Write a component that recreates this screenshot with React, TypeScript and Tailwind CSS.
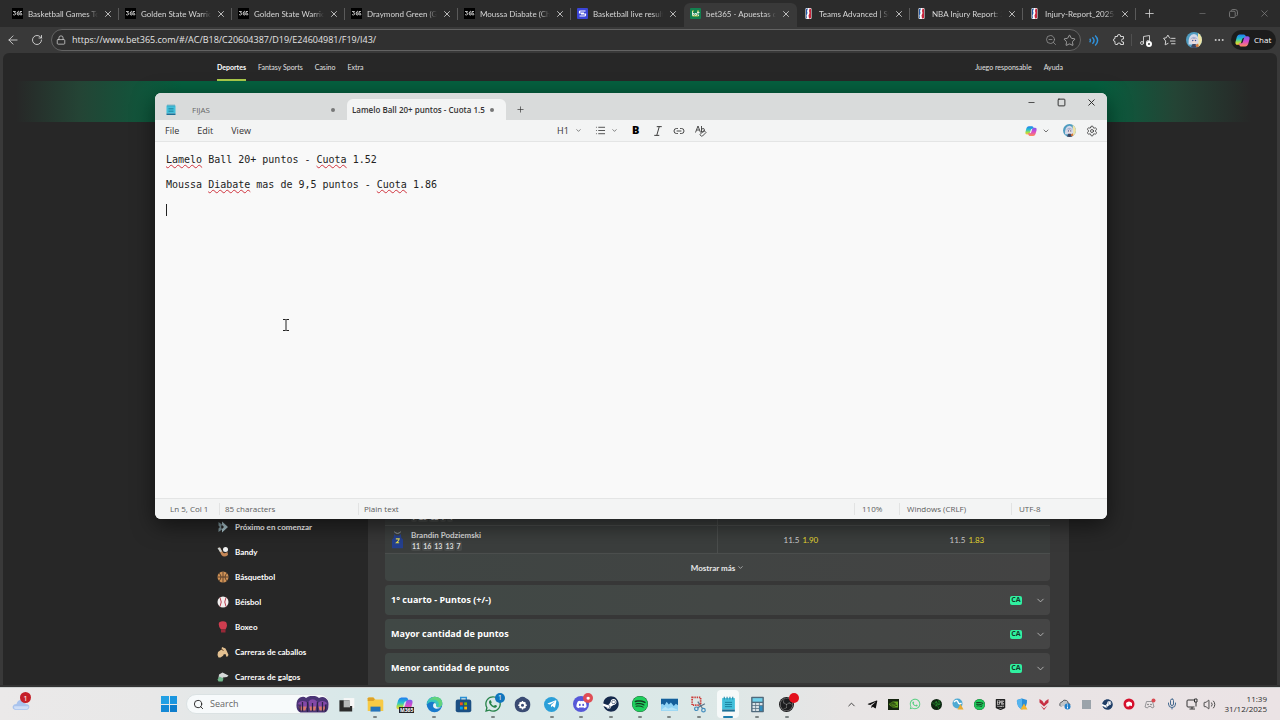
import type { ReactNode } from "react";
import {
  ArrowLeft,
  ChevronDown,
  ChevronUp,
  Ellipsis,
  Link2,
  List,
  Lock,
  Mic,
  Minus,
  Music,
  Plus,
  RotateCw,
  Search,
  Settings,
  Square,
  Star,
  Volume2,
  X,
  ZoomOut,
} from "lucide-react";
import { FaDiscord, FaSpotify, FaSteam, FaTelegramPlane, FaWhatsapp } from "react-icons/fa";
import { SiEpicgames, SiNvidia, SiObsstudio, SiRazer } from "react-icons/si";

const Icon365 = () => (
  <span className="flex h-[11px] w-[11px] shrink-0 items-center justify-center bg-black">
    <svg viewBox="0 0 22 22" className="h-[11px] w-[11px]" fill="none" stroke="#e5e5e5" strokeWidth="1.6">
      <path d="M2 7h5l-2 3q3 0 2 3q-2 2-5 0M14 6q-4 1-4 6q1 3 4 2q2-2 0-4h-3M20 7h-4v3q4 0 4 3q-2 2-4 0" />
    </svg>
  </span>
);

const IconSofa = () => (
  <svg viewBox="0 0 22 22" className="h-[11px] w-[11px] shrink-0">
    <rect width="22" height="22" rx="2" fill="#3b45d6" />
    <path d="M17 6H7q-2 0-2 2v2h9M5 16h10q2 0 2-2v-2H8" fill="none" stroke="#fff" strokeWidth="2.4" />
  </svg>
);

const IconBet = () => (
  <svg viewBox="0 0 22 22" className="h-[11px] w-[11px] shrink-0">
    <rect width="22" height="22" rx="2" fill="#12804f" />
    <path d="M5 6v9h3v-4H5M10 15v-4h3v4h-3M16 6v9h2M14 9h5" fill="none" stroke="#f0f4ea" strokeWidth="1.8" />
    <path d="M4 6h4M14 6h4M5 16h12" stroke="#e9e04a" strokeWidth="1.6" />
  </svg>
);

const IconNba = () => (
  <svg viewBox="0 0 12 22" className="mx-[2px] h-[11px] w-[7px] shrink-0">
    <rect width="12" height="22" rx="2" fill="#fff" />
    <path d="M1 3q0-2 2-2h2L3 6l1 4-2 5 1 6q-2 0-2-2z" fill="#2358a5" />
    <path d="M8 1h1q2 0 2 2v16q0 2-2 2H7l-1-6 2-5-1-4z" fill="#c9253c" />
  </svg>
);

const CopilotLogo = ({ className = "" }: { className?: string }) => (
  <svg viewBox="0 0 32 32" className={className}>
    <defs>
      <linearGradient id="cpa" x1="0" y1="0" x2="0" y2="1">
        <stop offset="0" stopColor="#1f7cf2" />
        <stop offset=".45" stopColor="#27c3c9" />
        <stop offset=".75" stopColor="#a4dd45" />
        <stop offset="1" stopColor="#ffc533" />
      </linearGradient>
      <linearGradient id="cpb" x1="0" y1="0" x2="0" y2="1">
        <stop offset="0" stopColor="#7a5cf0" />
        <stop offset=".5" stopColor="#d94bc8" />
        <stop offset="1" stopColor="#ff8a5c" />
      </linearGradient>
    </defs>
    <path d="M10 3h9q3 0 4 4l1 3h-5q-3 0-4 4l-2 7q-1 4-5 4H5q-5 0-4-6L4 8q2-5 6-5z" fill="url(#cpa)" />
    <path d="M22 29h-9q-3 0-4-4l-1-3h5q3 0 4-4l2-7q1-4 5-4h3q5 0 4 6l-3 11q-2 5-6 5z" fill="url(#cpb)" />
  </svg>
);

const Avatar = ({ className = "" }: { className?: string }) => (
  <svg viewBox="0 0 32 32" className={className}>
    <clipPath id="avc"><circle cx="16" cy="16" r="16" /></clipPath>
    <g clipPath="url(#avc)">
      <rect width="32" height="32" fill="#4f9cc0" />
      <rect x="24" width="8" height="32" fill="#efe3a4" />
      <path d="M5 25q-1-20 11-21q11 1 9 21z" fill="#d3d9ea" />
      <ellipse cx="16" cy="17" rx="5" ry="6" fill="#f0d8d6" />
      <path d="M8 15q7-11 16 0l-5-2-3 2-3-2z" fill="#a5b1d0" />
      <circle cx="13.500" cy="17" r="1.500" fill="#345497" />
      <circle cx="19" cy="17" r="1.500" fill="#345497" />
      <path d="M9 32l4-8h6l5 8z" fill="#3c4663" />
      <path d="M19 26l5-3 2 6-5 2z" fill="#d8783e" />
    </g>
  </svg>
);

const NotepadIcon = ({ className = "" }: { className?: string }) => (
  <svg viewBox="0 0 24 24" className={className}>
    <path d="M3 3h18v16H3z" fill="#43bfda" />
    <path d="M3 19h18v3H3z" fill="#1c6f95" />
    <path d="M7 9h10M7 12h10M7 15h10" stroke="#1b829f" strokeWidth="1.400" />
    <path d="M6 1v4M10 1v4M14 1v4M18 1v4" stroke="#1d87a8" strokeWidth="1.500" />
  </svg>
);

const browserTabs = [
  { title: "Basketball Games Toc", icon: <Icon365 /> },
  { title: "Golden State Warrior", icon: <Icon365 /> },
  { title: "Golden State Warrior", icon: <Icon365 /> },
  { title: "Draymond Green (Gc", icon: <Icon365 /> },
  { title: "Moussa Diabate (Cha", icon: <Icon365 /> },
  { title: "Basketball live results", icon: <IconSofa /> },
  { title: "bet365 - Apuestas de", icon: <IconBet />, active: true },
  { title: "Teams Advanced | Sta", icon: <IconNba /> },
  { title: "NBA Injury Report: 20", icon: <IconNba /> },
  { title: "Injury-Report_2025-1", icon: <IconNba /> },
];

const sports = [
  {
    name: "Próximo en comenzar",
    icon: <><path d="M3 2l7 5-2 5 2 5-7 5v-7l3-3-3-3z" fill="#7f979e" /><path d="M10 1l12 11-12 11v-7l4-4-4-4z" fill="#a9c4cc" /></>,
  },
  {
    name: "Bandy",
    icon: <><path d="M2 4l4-1 6 10q3 3 9-1l1 6q-8 6-13 0z" fill="#c58655" /><circle cx="17" cy="7" r="5" fill="#f2f2f2" /><path d="M1 4l5-1 4 8-4 1z" fill="#ccd4d4" /></>,
  },
  {
    name: "Básquetbol",
    icon: <><circle cx="12" cy="12" r="11" fill="#cf9256" /><path d="M12 1v22M1 12h22M4 4q8 8 0 16M20 4q-8 8 0 16" fill="none" stroke="#493323" strokeWidth="1.600" /></>,
  },
  {
    name: "Béisbol",
    icon: <><circle cx="12" cy="12" r="11" fill="#f1eeee" /><path d="M6 3q5 9 0 18M18 3q-5 9 0 18" fill="none" stroke="#bd3f50" strokeWidth="2" /></>,
  },
  {
    name: "Boxeo",
    icon: <><path d="M4 3q7-4 14-1q3 5 1 11l-2 4H8q-6-6-4-14z" fill="#cf3d4f" /><path d="M8 17h9v6H8z" fill="#962837" /></>,
  },
  {
    name: "Carreras de caballos",
    icon: <><path d="M1 18l1-6 7-5 1-5 7 3 3 6 3 7-3 4-7-3-6 4H3z" fill="#e4c191" /><path d="M13 17l4-1 2 6-7 1z" fill="#272727" /><path d="M8 6l5 3" stroke="#5e4128" strokeWidth="2" /></>,
  },
  {
    name: "Carreras de galgos",
    icon: <><path d="M4 7l7-4 12 6-3 3-8 1-4 5-5-4z" fill="#d5d8d8" /><path d="M1 17l4-6 8 4-2 6H3z" fill="#72b78c" /></>,
  },
];

const playerRows = [
  { name: "", form: ["9", "25", "12", "9", "4"], over: "", overOdds: "", under: "", underOdds: "" },
  { name: "Brandin Podziemski", form: ["11", "16", "13", "13", "7"], over: "11.5", overOdds: "1.90", under: "11.5", underOdds: "1.83" },
];

const markets = ["1° cuarto - Puntos (+/-)", "Mayor cantidad de puntos", "Menor cantidad de puntos"];

function BrowserChrome() {
  return (
    <header className="text-[#d6d6d6]">
      <div className="flex h-[27px] bg-[#2b2b2b] pt-[3px] pl-[6px]">
        {browserTabs.map((tab, i) => (
          <div
            key={i}
            className={`flex w-[113px] items-center gap-[5px] px-[6px] pb-[3px] ${tab.active ? "rounded-t-md bg-[#393939]" : ""}`}
          >
            {tab.icon}
            <span className="min-w-0 flex-1 font-['Lato','Open_Sans',sans-serif] text-[8px] whitespace-nowrap [mask-image:linear-gradient(to_right,black_85%,transparent)]">
              {tab.title}
            </span>
            <button aria-label="Cerrar pestaña" className="shrink-0"><X size={10} /></button>
            <span className={`-mr-[6px] h-3 w-px shrink-0 ${tab.active || i === 5 ? "" : "bg-[#5a5a5a]"}`} />
          </div>
        ))}
        <button aria-label="Nueva pestaña" className="flex w-[26px] items-center justify-center pb-[3px]"><Plus size={13} strokeWidth={1.5} /></button>
        <div className="ml-auto flex items-center pb-[3px] text-[#858585]">
          <button aria-label="Minimizar" className="flex w-[31px] justify-center"><Minus size={9} strokeWidth={1.5} /></button>
          <button aria-label="Restaurar" className="flex w-[31px] justify-center">
            <svg viewBox="0 0 16 16" className="h-[9px] w-[9px]" fill="none" stroke="currentColor" strokeWidth="1.500">
              <rect x="1" y="4" width="10" height="11" rx="2" />
              <path d="M4 3q0-2 3-2h4q4 0 4 4v5q0 2-2 2" />
            </svg>
          </button>
          <button aria-label="Cerrar" className="flex w-[31px] justify-center"><X size={11} strokeWidth={1.5} /></button>
        </div>
      </div>

      <div className="flex h-[26px] items-center bg-[#393939] pr-1 pl-[6px]">
        <button aria-label="Atrás" className="flex w-[14px] justify-center"><ArrowLeft size={14} strokeWidth={1.5} /></button>
        <button aria-label="Actualizar" className="ml-2 flex w-[18px] justify-center"><RotateCw size={12} strokeWidth={1.8} /></button>
        <label className="ml-[5px] flex h-[22px] flex-1 items-center gap-[6px] rounded-full border border-[#636363] bg-[#303030] px-1">
          <Lock size={10} strokeWidth={1.8} />
          <input
            aria-label="Dirección"
            defaultValue="https://www.bet365.com/#/AC/B18/C20604387/D19/E24604981/F19/I43/"
            className="min-w-0 flex-1 bg-transparent text-[9px] text-[#e4e4e4] outline-none"
          />
          <ZoomOut size={12} strokeWidth={1.5} className="text-[#9a9a9a]" />
          <Star size={13} strokeWidth={1.5} className="text-[#b5b5b5]" />
        </label>
        <button aria-label="Leer en voz alta" className="flex w-[25px] justify-center">
          <svg viewBox="0 0 20 20" className="h-[11px] w-[11px]" fill="none" stroke="#3092dc" strokeWidth="2.600">
            <path d="M3 7q3 3 0 6M8 4q6 6 0 12M13 1q9 9 0 18" />
          </svg>
        </button>
        <button aria-label="Extensiones" className="flex w-[25px] justify-center">
          <svg viewBox="0 0 24 24" className="h-3 w-3" fill="none" stroke="currentColor" strokeWidth="2">
            <path d="M4 5h5q-1-4 3-4t3 4h6v5q-4-1-4 3t4 3v5h-6q1-3-3-3t-3 3H6q-2 0-2-2v-4q-3 0-3-3t3-3z" />
          </svg>
        </button>
        <span className="h-3 w-px bg-[#505050]" />
        <button aria-label="Medios" className="relative flex w-[26px] justify-center">
          <Music size={12} strokeWidth={1.8} />
          <span className="absolute right-[6px] -bottom-[1px] h-[6px] w-[6px] rounded-full border-2 border-white bg-[#393939]" />
        </button>
        <button aria-label="Favoritos" className="flex w-[23px] justify-center">
          <svg viewBox="0 0 24 24" className="h-[13px] w-[13px]" fill="none" stroke="currentColor" strokeWidth="1.800">
            <path d="M14 8l-2-1-3-5-3 5-5 1 4 5-1 7 6-3M15 8h8M13 13h10M15 18h8" />
          </svg>
        </button>
        <button aria-label="Perfil" className="flex w-[25px] justify-center"><Avatar className="h-4 w-4" /></button>
        <button aria-label="Más" className="flex w-[25px] justify-center"><Ellipsis size={12} /></button>
        <button className="flex h-5 w-[45px] items-center gap-1 rounded-full bg-[#1c1c1c] pl-1 text-[8px] text-white">
          <CopilotLogo className="h-[15px] w-[15px]" />
          Chat
        </button>
      </div>
    </header>
  );
}

function BettingPage() {
  return (
    <main className="mx-[3px] flex min-h-0 flex-1 flex-col overflow-hidden rounded-t-md bg-[#272727] font-['Lato','Open_Sans',sans-serif] text-white">
      <nav className="flex h-[28px] shrink-0 items-stretch justify-center pl-[6px] text-[7px]">
        <div className="flex w-[852px] items-stretch gap-3 pr-[6px] text-[#e0e0e0]">
          <a href="#deportes" className="flex items-center border-b-2 border-[#a9c94a] pt-[2px] font-bold text-white">Deportes</a>
          <a href="#fantasy" className="flex items-center pt-px">Fantasy Sports</a>
          <a href="#casino" className="flex items-center pt-px">Casino</a>
          <a href="#extra" className="flex items-center pt-px">Extra</a>
          <a href="#juego" className="ml-auto flex items-center pt-px">Juego responsable</a>
          <a href="#ayuda" className="flex items-center pt-px">Ayuda</a>
        </div>
      </nav>
      <div className="h-[41px] shrink-0 bg-[linear-gradient(to_right,#272727_1%,#244435_6%,#05603f_14%,#05603f_86%,#244435_92%,#272727_98%)]" />

      <div className="flex min-h-0 flex-1 justify-center pl-[6px]">
        <aside className="flex w-[151px] flex-col justify-end overflow-hidden">
          <ul className="-mb-[4px] shrink-0">
            {sports.map((sport) => (
              <li key={sport.name}>
                <a href="#deporte" className="flex h-[25px] items-center gap-[6px] text-[8px] font-bold">
                  <svg viewBox="0 0 24 24" className="h-3 w-3">{sport.icon}</svg>
                  {sport.name}
                </a>
              </li>
            ))}
          </ul>
        </aside>

        <section className="flex w-[701px] flex-col justify-end gap-1 overflow-hidden bg-[#373737] pr-[19px] pb-[2px] pl-[17px]">
          <div className="shrink-0 overflow-hidden rounded bg-linear-to-r from-[#3f4543] to-[#434343]">
            <table className="w-full table-fixed border-collapse">
              <tbody>
                {playerRows.map((row, i) => (
                  <tr key={i} className="h-[28px] border-b border-[#4b4e4d] bg-[#3b3e3d]">
                    <td className="w-1/2 border-r border-[#4b4e4d] p-0">
                      <div className="flex items-center gap-2 pl-[7px]">
                        <svg viewBox="0 0 20 32" className="h-[18px] w-[11px]">
                          <path d="M4 5l3 3h6l3-3 1 7 3 3v16H0V15l3-3z" fill="#25408f" />
                          <path d="M4 1q6 6 12 0" fill="none" stroke="#a5abb5" strokeWidth="1.500" />
                          <path d="M7 14h6l-1 3-4 4h5" fill="none" stroke="#e5dc4e" strokeWidth="2" />
                        </svg>
                        <div>
                          <div className="h-3 text-[8px] leading-3 font-bold text-[#d8d8d8]">{row.name}</div>
                          <div className="flex gap-px">
                            {row.form.map((n, j) => (
                              <span key={j} className="rounded-xs bg-[#484b4a] px-px text-[7px] leading-[10px] font-bold text-[#dcdcdc]">{n}</span>
                            ))}
                          </div>
                        </div>
                      </div>
                    </td>
                    <td className="w-1/4 p-0 text-[8px] text-[#cfcfcf]">
                      <span className="flex justify-center gap-[3px]">{row.over}<span className="text-[#e8dc32]">{row.overOdds}</span></span>
                    </td>
                    <td className="w-1/4 p-0 text-[8px] text-[#cfcfcf]">
                      <span className="flex justify-center gap-[3px]">{row.under}<span className="text-[#e8dc32]">{row.underOdds}</span></span>
                    </td>
                  </tr>
                ))}
              </tbody>
            </table>
            <button className="flex h-[27px] w-full items-center justify-center gap-[2px] text-[8px] font-bold text-[#e8e8e8]">
              Mostrar más <ChevronDown size={7} />
            </button>
          </div>
          {markets.map((market) => (
            <button
              key={market}
              className="flex h-[30px] shrink-0 items-center rounded bg-linear-to-r from-[#404845] via-[#434745] to-[#454545] pr-1 pl-[6px] text-left font-['Open_Sans','Noto_Sans',sans-serif] text-[9px] font-bold"
            >
              <span className="flex-1">{market}</span>
              <span className="mr-[13px] flex h-[9px] w-3 items-center justify-center rounded-xs bg-[#30f0a0] text-[7px] font-bold text-[#14392b]">CA</span>
              <ChevronDown size={11} strokeWidth={1.8} className="text-[#c4c4c4]" />
            </button>
          ))}
        </section>
      </div>
    </main>
  );
}

const Misspelled = ({ children }: { children: string }) => (
  <span className="underline decoration-[#d0343f] decoration-wavy decoration-1 underline-offset-1">{children}</span>
);

function NotepadWindow() {
  return (
    <div className="absolute top-[93px] right-[173px] bottom-[201px] left-[155px] flex flex-col overflow-hidden rounded-md bg-[#f9f9f9] text-[#333] shadow-[0_6px_22px_rgba(0,0,0,0.55)]">
      <div className="flex h-[27px] shrink-0 items-end bg-[#d9dbdb]">
        <div className="flex h-[21px] w-[192px] items-center pr-3 pl-[10px] text-[#666]">
          <NotepadIcon className="h-3 w-3" />
          <span className="ml-[15px] flex-1 text-[8px]">FIJAS</span>
          <span className="h-1 w-1 rounded-full bg-[#777]" />
        </div>
        <div className="flex h-[21px] w-[159px] items-center rounded-t-md bg-[#f3f4f4] pr-3 pl-[5px]">
          <span className="flex-1 text-[8px] font-semibold whitespace-nowrap">Lamelo Ball 20+ puntos - Cuota 1.5</span>
          <span className="h-1 w-1 shrink-0 rounded-full bg-[#777]" />
        </div>
        <button aria-label="New tab" className="flex h-[21px] w-[29px] items-center justify-center"><Plus size={9} strokeWidth={1.8} /></button>
        <div className="mb-[9px] ml-auto flex h-[18px] items-center text-[#222]">
          <button aria-label="Minimize" className="flex w-[30px] justify-center"><Minus size={9} /></button>
          <button aria-label="Maximize" className="flex w-[30px] justify-center"><Square size={9} strokeWidth={2.4} /></button>
          <button aria-label="Close" className="flex w-[31px] justify-center"><X size={11} /></button>
        </div>
      </div>

      <div className="grid h-[22px] shrink-0 grid-cols-[1fr_auto_1fr] items-center border-b border-[#e4e5e5] bg-[#f3f4f4]">
        <div className="flex gap-[18px] pl-[10px] text-[9px]">
          <button>File</button>
          <button>Edit</button>
          <button>View</button>
        </div>
        <div className="flex items-center pl-[2px]">
          <button className="flex w-[38px] items-center gap-[6px] text-[9px]">H1 <ChevronDown size={7} /></button>
          <button aria-label="List" className="flex w-[37px] items-center gap-[5px]"><List size={11} strokeWidth={1.8} /><ChevronDown size={7} /></button>
          <button aria-label="Bold" className="flex w-[21px] items-start text-[11px] font-extrabold text-black">B</button>
          <button aria-label="Italic" className="flex w-5 items-center">
            <svg viewBox="0 0 16 16" className="h-[10px] w-[10px]" fill="none" stroke="currentColor" strokeWidth="1.500">
              <path d="M6 1h8M2 15h8M10 1L6 15" />
            </svg>
          </button>
          <button aria-label="Link" className="flex w-[22px] items-center"><Link2 size={12} strokeWidth={1.8} /></button>
          <button aria-label="Clear formatting" className="flex w-3 items-center">
            <svg viewBox="0 0 24 24" className="h-3 w-3" fill="none" stroke="currentColor" strokeWidth="1.700">
              <path d="M1 15L6 2l5 13M3 10h6M13 2v12q6 1 6-4t-6-2M11 18l7-7 4 4-7 7q-2 1-4-1t0-3z" />
            </svg>
          </button>
        </div>
        <div className="flex items-center justify-end pr-[9px]">
          <button aria-label="Copilot" className="flex items-center gap-[5px]">
            <CopilotLogo className="h-3 w-3" />
            <ChevronDown size={8} />
          </button>
          <button aria-label="Account" className="ml-[13px]"><Avatar className="h-[13px] w-[13px]" /></button>
          <button aria-label="Settings" className="ml-[10px]"><Settings size={12} strokeWidth={1.6} /></button>
        </div>
      </div>

      <div
        role="textbox"
        aria-multiline="true"
        aria-label="Text editor"
        contentEditable
        suppressContentEditableWarning
        className="min-h-0 flex-1 overflow-hidden px-[11px] pt-[5px] font-['DejaVu_Sans_Mono',monospace] text-[10px] leading-[25px] text-[#222] outline-none"
      >
        <p><Misspelled>Lamelo</Misspelled> Ball 20+ puntos - <Misspelled>Cuota</Misspelled> 1.52</p>
        <p>Moussa <Misspelled>Diabate</Misspelled> mas de 9,5 puntos - <Misspelled>Cuota</Misspelled> 1.86</p>
        <p className="flex h-[25px] items-center"><span className="h-3 w-px bg-[#222]" /></p>
      </div>

      <footer className="flex h-[21px] shrink-0 items-center border-t border-[#e4e5e5] bg-[#f3f4f4] text-[8px] text-[#5c5c5c]">
        <span className="w-[64px] pl-[15px]">Ln 5, Col 1</span>
        <span className="w-[139px] border-l border-[#e2e3e3] pl-[5px]">85 characters</span>
        <span className="flex-1 border-l border-[#e2e3e3] pl-[5px]">Plain text</span>
        <span className="w-[45px] border-l border-[#e2e3e3] pl-[7px]">110%</span>
        <span className="w-[112px] border-l border-[#e2e3e3] pl-[7px]">Windows (CRLF)</span>
        <span className="w-[96px] border-l border-[#e2e3e3] pl-[7px]">UTF-8</span>
      </footer>
    </div>
  );
}

const Svg = ({ children, size = "h-[17px] w-[17px]" }: { children: ReactNode; size?: string }) => (
  <svg viewBox="0 0 24 24" className={size}>{children}</svg>
);

const taskbarApps: { name: string; icon: ReactNode; running?: boolean; active?: boolean; badge?: string; badgeColor?: string }[] = [
  { name: "Escritorios", icon: <Svg><rect x="8" y="3" width="15" height="14" fill="#f7f7f7" /><path d="M2 6h14v8h4v8H2z" fill="#2c2c2c" /><path d="M8 6h9v10H8z" fill="#b7baba" /></Svg> },
  { name: "Explorador", running: true, icon: <Svg><path d="M1 4q0-2 2-2h6l3 3h9q2 0 2 2v14H1z" fill="#f7ca45" /><path d="M1 3q0-1 2-1h6l2 3-2 2H1z" fill="#dda129" /><path d="M5 15h14v7H5z" fill="#2374bb" /></Svg> },
  {
    name: "Microsoft 365",
    icon: (
      <span className="relative block">
        <CopilotLogo className="h-[17px] w-[17px]" />
        <span className="absolute right-[-1px] bottom-0 bg-[#222] px-px text-[5px] leading-[6px] font-bold text-white">M365</span>
      </span>
    ),
  },
  {
    name: "Edge",
    running: true,
    icon: (
      <Svg>
        <circle cx="12" cy="12" r="11" fill="#1879cb" />
        <path d="M1 12Q2 1 13 1q10 1 10 9 0 6-7 6-3 0-3-2 2-3-1-5-6-3-11 3z" fill="#39c5bd" />
        <path d="M12 1q11 0 11 10 0 5-7 5 4-4 1-8-4-5-13-2 4-5 8-5z" fill="#63d37c" />
        <path d="M10 14q0-4 3-4 2 2 1 4 1 3 8 2-3 2-7 2-5-1-5-4z" fill="#e9f4f7" />
      </Svg>
    ),
  },
  {
    name: "Microsoft Store",
    icon: (
      <Svg>
        <path d="M8 6V2h8v4" fill="none" stroke="#2b8fd4" strokeWidth="2" />
        <rect x="1" y="5" width="22" height="18" rx="3" fill="#1b4f83" />
        <path d="M7 9h4v4H7z" fill="#f25022" /><path d="M13 9h4v4h-4z" fill="#7fba00" />
        <path d="M7 15h4v4H7z" fill="#00a4ef" /><path d="M13 15h4v4h-4z" fill="#ffb900" />
      </Svg>
    ),
  },
  { name: "WhatsApp", running: true, badge: "1", badgeColor: "bg-[#1176bd]", icon: <FaWhatsapp size={18} color="#27834a" /> },
  {
    name: "Configuración",
    icon: (
      <Svg>
        <path d="M7 3q5-4 10 0 6 2 6 9 0 6-4 9-7 4-14 0-4-3-4-9 0-7 6-9z" fill="#3a4b73" />
        <circle cx="12" cy="13" r="3.500" fill="none" stroke="#fff" strokeWidth="2.600" />
        <path d="M12 7v3M12 16v3M6 13h3M15 13h3M8 9l2 2M14 15l2 2M16 9l-2 2M10 15l-2 2" stroke="#fff" strokeWidth="2" />
      </Svg>
    ),
  },
  { name: "Telegram", running: true, icon: <span className="flex h-[15px] w-[15px] items-center justify-center rounded-full bg-[#2b9fd8]"><FaTelegramPlane size={10} color="#fff" /></span> },
  { name: "Discord", running: true, badge: "●", badgeColor: "bg-[#df4d55]", icon: <span className="flex h-4 w-4 items-center justify-center rounded-full bg-[#5658d8]"><FaDiscord size={11} color="#fff" /></span> },
  { name: "Steam", running: true, icon: <span className="block rounded-full bg-white"><FaSteam size={16} color="#152a4c" /></span> },
  { name: "Spotify", running: true, icon: <span className="block rounded-full bg-[#143c22]"><FaSpotify size={16} color="#20cf5e" /></span> },
  { name: "Monitor", running: true, icon: <Svg><path d="M0 4h24v17H0z" fill="#8fd2f4" /><path d="M0 4h24v9l-3-2-3 3-4-5-3 3-3-4-3 5-3-2-2 1z" fill="#145f9b" /><path d="M1 19l5-4 4 3 5-2 8 3v1H1z" fill="#b4e4f8" /></Svg> },
  { name: "Recortes", running: true, icon: <Svg><rect x="3" y="2" width="12" height="11" fill="none" stroke="#cc3b38" strokeWidth="2.400" strokeDasharray="2 1.200" /><path d="M11 8l7 10M21 11L10 17" stroke="#5b7489" strokeWidth="1.800" /><circle cx="19" cy="20" r="2.500" fill="none" stroke="#3f8bbd" strokeWidth="1.700" /><circle cx="9" cy="18" r="2.500" fill="none" stroke="#3f8bbd" strokeWidth="1.700" /></Svg> },
  { name: "Bloc de notas", running: true, active: true, icon: <NotepadIcon className="h-[17px] w-[17px]" /> },
  {
    name: "Calculadora",
    running: true,
    icon: (
      <Svg>
        <rect x="3" y="1" width="18" height="22" rx="1" fill="#506a7c" />
        <path d="M5 3h14v5H5z" fill="#6fd0ea" />
        <path d="M5 10h4v3H5zM10 10h4v3h-4zM15 10h4v3h-4zM5 14h4v3H5zM10 14h4v3h-4zM5 18h4v3H5zM10 18h4v3h-4z" fill="#d9e2e7" />
        <path d="M15 14h4v7h-4z" fill="#2f8fc1" />
      </Svg>
    ),
  },
  { name: "OBS", running: true, badge: " ", badgeColor: "bg-[#e3101c]", icon: <span className="flex h-[15px] w-[15px] items-center justify-center rounded-full bg-[#1d1d1f]"><SiObsstudio size={13} color="#8a8a8a" /></span> },
];

const ShieldTray = () => (
  <Svg size="h-3 w-3">
    <path d="M12 1l10 3q1 14-10 19Q1 18 2 4z" fill="#2a8fd8" />
    <path d="M12 1v22Q1 18 2 4z" fill="#56b4ee" />
    <path d="M16 11l7 12H9z" fill="#f5b52c" />
  </Svg>
);

const trayIcons: { name: string; icon: ReactNode }[] = [
  { name: "Mostrar iconos ocultos", icon: <ChevronUp size={11} color="#333" /> },
  { name: "Telegram", icon: <FaTelegramPlane size={11} color="#111" /> },
  { name: "NVIDIA", icon: <span className="flex h-[11px] w-[11px] items-center justify-center bg-[#15240f]"><SiNvidia size={9} color="#68a722" /></span> },
  { name: "WhatsApp", icon: <FaWhatsapp size={12} color="#55cf80" /> },
  { name: "Razer", icon: <span className="flex h-[11px] w-[11px] items-center justify-center rounded-full bg-[#0d2511]"><SiRazer size={9} color="#36e045" /></span> },
  { name: "Red", icon: <Svg size="h-3 w-3"><circle cx="11" cy="11" r="10" fill="#4eaad3" /><path d="M4 8q6-6 8 0t7 2" fill="none" stroke="#fff" strokeWidth="3" /><path d="M17 12l6 11H11z" fill="#e9ac32" /></Svg> },
  { name: "Spotify", icon: <span className="block rounded-full bg-[#154423]"><FaSpotify size={11} color="#20c85b" /></span> },
  { name: "Epic Games", icon: <SiEpicgames size={11} color="#222" /> },
  { name: "Seguridad", icon: <ShieldTray /> },
  { name: "Antivirus", icon: <Svg size="h-3 w-3"><path d="M3 2l6 4 3 5 3-5 6-4v7l-9 8-9-8z" fill="#c72f42" /><path d="M5 15l7 6 7-6-7 9z" fill="#c72f42" /></Svg> },
  { name: "OneDrive", icon: <Svg size="h-3 w-3"><path d="M4 17q-4-2-2-6 1-3 4-3 3-6 9-3 3 1 3 5 4 1 4 4" fill="#bfc4c8" stroke="#4d5257" strokeWidth="1.800" /><circle cx="17" cy="17" r="6" fill="#1f7fca" /><path d="M17 13v2M17 17v4" stroke="#fff" strokeWidth="2" /></Svg> },
  { name: "Aplicación", icon: <span className="block h-[9px] w-[9px] bg-[#9ba3aa]" /> },
  { name: "Steam", icon: <span className="block rounded-full bg-white"><FaSteam size={11} color="#203e66" /></span> },
  { name: "Riot", icon: <Svg size="h-3 w-3"><circle cx="12" cy="12" r="11" fill="#d5102c" /><path d="M6 10q6-6 12 0v6l-5-1-1 2H7z" fill="#fff" /></Svg> },
  { name: "Discord", icon: <Svg size="h-3 w-3"><path d="M5 7h12l3 11-4 2-2-3H9l-2 3-5-2z" fill="none" stroke="#8c8c90" strokeWidth="1.800" /><circle cx="8" cy="13" r="1.500" fill="#666" /><circle cx="14" cy="13" r="1.500" fill="#666" /><circle cx="19" cy="5" r="4" fill="#d94950" /></Svg> },
  { name: "Micrófono", icon: <Mic size={12} color="#44698f" /> },
];

function Taskbar() {
  return (
    <footer className="relative z-10 flex h-8 shrink-0 items-center bg-[linear-gradient(to_right,#ebe9e9,#e8e8e8_12%,#d8e8e9_28%,#dce8e7_55%,#e8e5e5_66%,#ebe3e5)] pr-[13px] pl-3">
      <button aria-label="Clima" className="relative w-5">
        <Svg size="h-[18px] w-[18px]">
          <path d="M5 20q-5-1-4-5 1-3 5-3 2-7 8-5 4 1 4 5 6 0 5 5-1 3-5 3z" fill="#a9c3ed" />
          <path d="M5 19q-3-1-2-4h19q0 4-4 4z" fill="#cfdef6" />
        </Svg>
        <span className="absolute -top-[3px] left-2 flex h-[11px] w-[11px] items-center justify-center rounded-full bg-[#c51f28] text-[8px] text-white">1</span>
      </button>
      <button aria-label="Inicio" className="ml-[129px] grid h-4 w-4 grid-cols-2 gap-px">
        <span className="bg-[#22a0e4]" />
        <span className="bg-[#1b96df]" />
        <span className="bg-[#158ad6]" />
        <span className="bg-[#0d7dcc]" />
      </button>
      <label className="ml-[9px] flex h-5 w-[144px] items-center gap-[6px] rounded-full border border-[#dbe2e3] bg-[#f7fafb] pl-[6px]">
        <Search size={11} color="#222" className="shrink-0" />
        <input aria-label="Search" placeholder="Search" className="w-0 flex-1 bg-transparent text-[9px] outline-none placeholder:text-[#666]" />
        <svg viewBox="0 0 66 34" className="h-[17px] w-[33px] shrink-0">
          <path d="M8 3q8-3 12 1 6-5 13-4 8-1 13 4 7-4 13 0 7 5 6 14 0 14-8 15H9Q0 29 1 17 1 7 8 3z" fill="#4a3475" />
          <path d="M4 14q10-8 20 0l-3 10H9zM25 11q8-9 17 0l-2 13H27zM43 14q10-8 19 0l-5 10H46z" fill="#8449a8" />
          <path d="M5 21h16l-2 8H9zM27 21h13l-1 8H28zM45 21h15l-4 8H47z" fill="#d9786f" />
          <path d="M13 12v19M23 12v20M33 14v16M43 12v20M53 12v19M8 17v14M59 17v14" stroke="#2f2348" strokeWidth="2.500" />
        </svg>
      </label>

      <div className="ml-[5px] flex flex-1 justify-between">
        {taskbarApps.map((app) => (
          <button
            key={app.name}
            aria-label={app.name}
            className={`relative flex h-7 w-[22px] items-center justify-center rounded-sm ${app.active ? "bg-[#f6f9f9]" : ""}`}
          >
            {app.icon}
            {app.badge && (
              <span className={`absolute top-[3px] right-[-1px] flex h-[10px] w-[10px] items-center justify-center rounded-full text-[7px] text-white ${app.badgeColor}`}>
                {app.badge}
              </span>
            )}
            {app.running && (
              <span className={`absolute bottom-0 h-[2px] rounded-full ${app.active ? "w-[10px] bg-[#1c7dac]" : "w-1 bg-[#7c8484]"}`} />
            )}
          </button>
        ))}
      </div>

      <div className="ml-[47px] flex w-[333px] items-center justify-between">
        {trayIcons.map((item) => (
          <button key={item.name} aria-label={item.name} className="flex w-3 justify-center">{item.icon}</button>
        ))}
      </div>
      <button aria-label="Red y volumen" className="ml-2 flex items-center gap-[5px] text-[#333]">
        <svg viewBox="0 0 24 24" className="h-3 w-3" fill="none" stroke="currentColor" strokeWidth="2">
          <path d="M16 4H4q-2 0-2 2v10q0 2 2 2h13M7 22h11M12 18v4M17 2h5v6h-5zM20 8v9" />
        </svg>
        <Volume2 size={13} strokeWidth={1.6} />
      </button>
      <time className="w-[51px] text-right text-[8px] leading-[10px] text-[#2c2c2c]">11:39<br />31/12/2025</time>
    </footer>
  );
}

export default function App() {
  return (
    <div className="relative flex h-screen flex-col overflow-hidden bg-[#393939] font-['Open_Sans','Noto_Sans',sans-serif]">
      <BrowserChrome />
      <BettingPage />
      <div className="h-[3px] shrink-0 border-b border-[#cfd2d2] bg-[#333]" />
      <NotepadWindow />
      <Taskbar />
      <svg viewBox="0 0 8 12" className="absolute top-[319px] left-[282px] h-3 w-2" fill="none" stroke="#222">
        <path d="M1 .5h2.500l.5.500.5-.500H7M4 1v10M1 11.500h2.500l.5-.500.5.500H7" />
      </svg>
    </div>
  );
}
